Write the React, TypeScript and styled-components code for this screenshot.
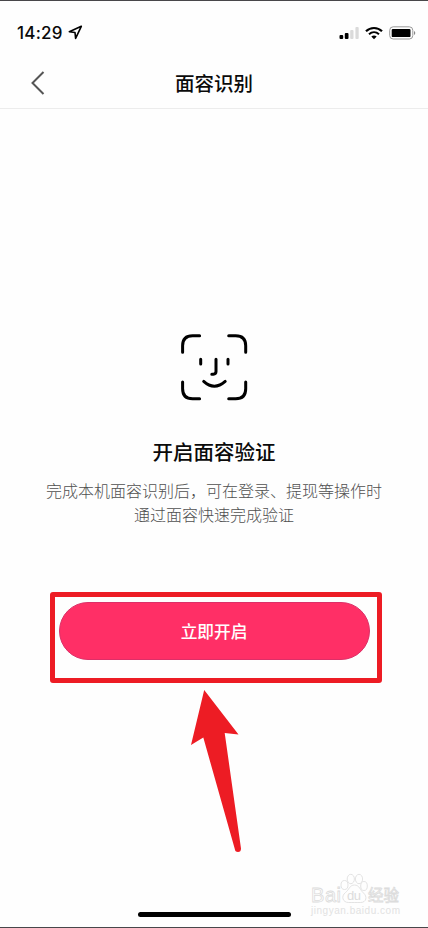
import React from "react";
import styled, { createGlobalStyle } from "styled-components";

const GlobalStyle = createGlobalStyle`
  * { box-sizing: border-box; }
  body { margin: 0; background: #fff; }
`;

const Screen = styled.div`
  position: relative;
  display: flex;
  flex-direction: column;
  width: 428px;
  height: 928px;
  overflow: hidden;
  background: #fefefe;
  border-top: 1px solid #48474a;
  border-bottom: 1px solid #48474a;
  font-family: "Noto Sans CJK SC", sans-serif;
  color: #0a0a0a;
`;

const StatusBar = styled.div`
  display: flex;
  justify-content: space-between;
  align-items: center;
  height: 58px;
  padding: 5px 12px 0 17px;
`;

const Clock = styled.div`
  display: flex;
  align-items: center;
  gap: 5px;
  font: 500 17px/20px Inter, sans-serif;
  letter-spacing: 0.25px;
`;

const StatusIcons = styled.div`
  display: flex;
  align-items: center;
  gap: 6px;
`;

const NavBar = styled.header`
  display: grid;
  grid-template-columns: 76px 1fr 76px;
  align-items: center;
  height: 50px;
  padding-bottom: 1px;
  border-bottom: 1px solid #ececec;
`;

const BackButton = styled.button`
  display: flex;
  padding: 0 0 0 31px;
  border: 0;
  background: none;
`;

const NavTitle = styled.h1`
  margin: 0;
  text-align: center;
  font-size: 19.5px;
  line-height: 28px;
  font-weight: 500;
`;

const Content = styled.main`
  display: flex;
  flex: 1;
  flex-direction: column;
  align-items: center;
  padding-top: 224px;
`;

const Heading = styled.h2`
  margin: 35px 0 0;
  font-size: 20.5px;
  line-height: 30px;
  font-weight: 500;
`;

const Description = styled.p`
  margin: 12px 0 0;
  text-align: center;
  font-size: 16px;
  line-height: 24px;
  font-weight: 300;
  color: #505050;
`;

const Highlight = styled.div`
  width: 332px;
  height: 91px;
  margin: 66px 0 0 3px;
  padding: 5px 7px 0 4px;
  border: 5px solid #ed1c24;
  border-radius: 3px;
`;

const PrimaryButton = styled.button`
  display: block;
  width: 311px;
  height: 58px;
  padding: 0;
  border: 1px solid #dc3068;
  border-radius: 29px;
  background: #ff2f66;
  color: #fff;
  font: 500 16.7px/24px "Noto Sans CJK SC", sans-serif;
`;

const PointerArrow = styled.svg`
  position: absolute;
  left: 185px;
  top: 684px;
`;

const Watermark = styled.svg`
  position: absolute;
  left: 304px;
  top: 869px;
`;

const HomeIndicator = styled.div`
  align-self: center;
  width: 153px;
  height: 5px;
  margin-bottom: 10px;
  border-radius: 3px;
  background: #000;
`;

const LocationIcon = () => (
  <svg width="15" height="15" viewBox="0 0 15 15" fill="none" stroke="#000" strokeWidth="1.6" strokeLinejoin="round">
    <path d="M13.300 1.300 1.300 6.700l5.700.8.6 5.900Z" />
  </svg>
);

const SignalIcon = () => (
  <svg width="20" height="14" viewBox="0 0 20 14">
    <rect x=".5" y="9" width="3.700" height="4" rx="1" />
    <rect x="5.800" y="7" width="3.700" height="6" rx="1" />
    <rect x="11.200" y="4" width="3.300" height="9" rx="1" fill="#dadada" />
    <rect x="16.400" y="1" width="3.300" height="12" rx="1" fill="#dadada" />
  </svg>
);

const WifiIcon = () => (
  <svg width="18" height="14" viewBox="0 0 18 14" fill="none" stroke="#000">
    <path d="M1 5.200C5.500.9 12.500.9 17 5.200" strokeWidth="2.200" />
    <path d="M4 8.200c3-2.700 7-2.700 10 0" strokeWidth="2" />
    <path d="M6.300 10.500c1.700-1.300 3.700-1.300 5.400 0L9 13.200Z" fill="#000" stroke="none" />
  </svg>
);

const BatteryIcon = () => (
  <svg width="27" height="14" viewBox="0 0 27 14">
    <rect x=".7" y=".8" width="23.100" height="12.200" rx="3.500" fill="none" stroke="#9a9a9a" />
    <rect x="2.700" y="2.900" width="18.800" height="8.200" rx="1.200" />
    <path d="M25.100 4.900c1.500.8 1.500 3.300 0 4.100Z" fill="#777" />
  </svg>
);

const FaceIcon = () => (
  <svg width="68" height="68" viewBox="180 333 68 68" fill="none" stroke="#000" strokeWidth="3" strokeLinecap="round" strokeLinejoin="round">
    <path d="M182.600 352.300v-6.500q0-10 10-10h7M228.700 335.800h7q10 0 10 10v6.500M245.700 382v6.700q0 10-10 10h-7M199.600 398.700h-7q-10 0-10-10v-6.700" />
    <path d="M200.700 359.300v4.700M228 359.300v4.700M216 359.200v12.400q0 2.600-2.600 2.600h-1.600M203.700 381.400q10.500 9.600 21.500 0" />
  </svg>
);

export default function App() {
  return (
    <>
      <GlobalStyle />
      <Screen>
        <StatusBar>
          <Clock>14:29<LocationIcon /></Clock>
          <StatusIcons><SignalIcon /><WifiIcon /><BatteryIcon /></StatusIcons>
        </StatusBar>
        <NavBar>
          <BackButton aria-label="返回">
            <svg width="14" height="24" viewBox="0 0 14 24" fill="none" stroke="#555" strokeWidth="2">
              <path d="M12.500 1 1.500 12l11 11" />
            </svg>
          </BackButton>
          <NavTitle>面容识别</NavTitle>
        </NavBar>
        <Content>
          <FaceIcon />
          <Heading>开启面容验证</Heading>
          <Description>
            完成本机面容识别后，可在登录、提现等操作时
            <br />
            通过面容快速完成验证
          </Description>
          <Highlight>
            <PrimaryButton>立即开启</PrimaryButton>
          </Highlight>
        </Content>
        <HomeIndicator />
        <PointerArrow width="60" height="174" viewBox="185 685 60 174" fill="#ed1c24">
          <path d="M204.200 690 238.500 734.500 224.700 733 241 848.500Q241 852 238 852T234.800 849L203.300 737.500 191 745Z" />
        </PointerArrow>
        <Watermark width="104" height="52" viewBox="304 870 104 52" fill="#fefefe" stroke="#dcdcdc" strokeWidth=".8" fontFamily="Liberation Sans, sans-serif">
          <text x="311" y="902" fontSize="20" fontWeight="400" textLength="30">Bai</text>
          <ellipse cx="344.500" cy="885" rx="3.500" ry="4.500" />
          <ellipse cx="350.800" cy="879" rx="3.600" ry="4.700" />
          <ellipse cx="359" cy="879" rx="3.600" ry="4.700" />
          <ellipse cx="364" cy="886" rx="3.300" ry="4.500" />
          <path d="M354.500 885c-5 0-5.500 5-9 7.500-5 4-2.500 10 3 10 3 0 9 0 12 0 6 0 7-6 3-9.500-3.500-3-4-8-9-8Z" />
          <text x="347" y="900" fontSize="13" fill="#dcdcdc" stroke="none" textLength="14">du</text>
          <text x="368" y="901" fontSize="15.500" fontWeight="400" fontFamily="Noto Sans CJK SC, sans-serif">经验</text>
          <text x="311" y="914" fontSize="10" fill="#e2e2e2" stroke="none" textLength="89">jingyan.baidu.com</text>
        </Watermark>
      </Screen>
    </>
  );
}
